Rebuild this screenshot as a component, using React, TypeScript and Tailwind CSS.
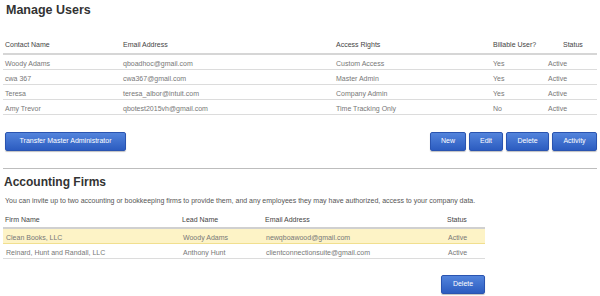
const users = [
  { name: 'Woody Adams', email: 'qboadhoc@gmail.com', rights: 'Custom Access', billable: 'Yes', status: 'Active' },
  { name: 'cwa 367', email: 'cwa367@gmail.com', rights: 'Master Admin', billable: 'Yes', status: 'Active' },
  { name: 'Teresa', email: 'teresa_albor@intuit.com', rights: 'Company Admin', billable: 'Yes', status: 'Active' },
  { name: 'Amy Trevor', email: 'qbotest2015vh@gmail.com', rights: 'Time Tracking Only', billable: 'No', status: 'Active' },
];

const firms = [
  { firm: 'Clean Books, LLC', lead: 'Woody Adams', email: 'newqboawood@gmail.com', status: 'Active', selected: true },
  { firm: 'Reinard, Hunt and Randall, LLC', lead: 'Anthony Hunt', email: 'clientconnectionsuite@gmail.com', status: 'Active', selected: false },
];

function BlueBtn({ children, className }: { children: React.ReactNode; className?: string }) {
  return (
    <button
      className={`h-[19px] rounded-[2px] border border-[#2a54b0] bg-gradient-to-b from-[#5384dc] to-[#2c5cc0] text-[7px] text-white shadow-[0_1px_1px_rgba(0,0,0,0.25)] ${className ?? ''}`}
    >
      {children}
    </button>
  );
}

export default function App() {
  return (
    <div className="h-[296px] w-[600px] overflow-hidden bg-white px-[3px] font-['Liberation_Sans',Arial,sans-serif] text-[#777]">
      <h1 className="pl-[3px] pt-[2px] text-[12.5px] font-bold leading-[16px] text-[#333]">Manage Users</h1>

      {/* users table */}
      <div className="mt-[20px]">
        <div className="grid h-[17px] grid-cols-[118px_213px_157px_70px_1fr] items-center border-b-2 border-[#d6d6d6] pb-[1px] pl-[2px] text-[7px] text-[#444]">
          <span>Contact Name</span>
          <span>Email Address</span>
          <span>Access Rights</span>
          <span>Billable User?</span>
          <span>Status</span>
        </div>
        {users.map((u) => (
          <div
            key={u.email}
            className="grid h-[15px] grid-cols-[118px_213px_157px_55px_1fr] items-center border-b border-[#dcdcdc] pl-[2px] pt-[4px] text-[7px]"
          >
            <span>{u.name}</span>
            <span>{u.email}</span>
            <span>{u.rights}</span>
            <span>{u.billable}</span>
            <span>{u.status}</span>
          </div>
        ))}
      </div>

      <div className="mt-[17px] flex items-center pl-[2px]">
        <BlueBtn className="w-[121px]">Transfer Master Administrator</BlueBtn>
        <div className="ml-auto flex gap-[3px]">
          <BlueBtn className="w-[36px]">New</BlueBtn>
          <BlueBtn className="w-[34px]">Edit</BlueBtn>
          <BlueBtn className="w-[43px]">Delete</BlueBtn>
          <BlueBtn className="w-[45px]">Activity</BlueBtn>
        </div>
      </div>

      <div className="mt-[17px] border-t border-[#bdbdbd]" />

      <h2 className="pl-[1px] pt-[6px] text-[12px] font-bold leading-[15px] text-[#333]">Accounting Firms</h2>
      <p className="mt-[6px] pl-[2px] text-[7px] leading-[10px] text-[#555]">
        You can invite up to two accounting or bookkeeping firms to provide them, and any employees they may have authorized, access to your company data.
      </p>

      {/* firms table */}
      <div className="mt-[7px] w-[482px]">
        <div className="grid h-[16px] grid-cols-[177px_83px_182px_1fr] items-center border-b-2 border-[#d0d0d0] pl-[2px] text-[7px] text-[#444]">
          <span>Firm Name</span>
          <span>Lead Name</span>
          <span>Email Address</span>
          <span>Status</span>
        </div>
        {firms.map((f) => (
          <div
            key={f.firm}
            className={`grid h-[15px] grid-cols-[177px_83px_182px_1fr] items-center border-b pl-[3px] pt-[4px] text-[7px] ${
              f.selected ? 'border-[#f1df8f] bg-[#fdf3c6]' : 'border-[#dcdcdc]'
            }`}
          >
            <span>{f.firm}</span>
            <span>{f.lead}</span>
            <span>{f.email}</span>
            <span>{f.status}</span>
          </div>
        ))}
        <div className="mt-[16px] flex justify-end">
          <BlueBtn className="w-[44px]">Delete</BlueBtn>
        </div>
      </div>
    </div>
  );
}
